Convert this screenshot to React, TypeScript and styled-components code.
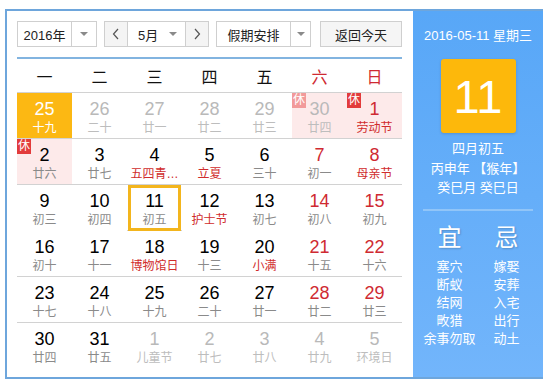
import React from "react";
import styled, { createGlobalStyle, css } from "styled-components";

const GlobalStyle = createGlobalStyle`
  body {
    margin: 0;
    background: #fff;
    font-family: "Liberation Sans", "Noto Sans CJK SC", sans-serif;
  }
`;

type Day = {
  n: number;
  sub: string;
  other?: boolean;
  red?: boolean;
  fest?: boolean;
  rest?: boolean;
  hover?: boolean;
  today?: boolean;
};

const weeks: Day[][] = [
  [
    { n: 25, sub: "十九", other: true, hover: true },
    { n: 26, sub: "二十", other: true },
    { n: 27, sub: "廿一", other: true },
    { n: 28, sub: "廿二", other: true },
    { n: 29, sub: "廿三", other: true },
    { n: 30, sub: "廿四", other: true, rest: true },
    { n: 1, sub: "劳动节", red: true, fest: true, rest: true },
  ],
  [
    { n: 2, sub: "廿六", rest: true },
    { n: 3, sub: "廿七" },
    { n: 4, sub: "五四青…", fest: true },
    { n: 5, sub: "立夏", fest: true },
    { n: 6, sub: "三十" },
    { n: 7, sub: "初一", red: true },
    { n: 8, sub: "母亲节", red: true, fest: true },
  ],
  [
    { n: 9, sub: "初三" },
    { n: 10, sub: "初四" },
    { n: 11, sub: "初五", today: true },
    { n: 12, sub: "护士节", fest: true },
    { n: 13, sub: "初七" },
    { n: 14, sub: "初八", red: true },
    { n: 15, sub: "初九", red: true },
  ],
  [
    { n: 16, sub: "初十" },
    { n: 17, sub: "十一" },
    { n: 18, sub: "博物馆日", fest: true },
    { n: 19, sub: "十三" },
    { n: 20, sub: "小满", fest: true },
    { n: 21, sub: "十五", red: true },
    { n: 22, sub: "十六", red: true },
  ],
  [
    { n: 23, sub: "十七" },
    { n: 24, sub: "十八" },
    { n: 25, sub: "十九" },
    { n: 26, sub: "二十" },
    { n: 27, sub: "廿一" },
    { n: 28, sub: "廿二", red: true },
    { n: 29, sub: "廿三", red: true },
  ],
  [
    { n: 30, sub: "廿四" },
    { n: 31, sub: "廿五" },
    { n: 1, sub: "儿童节", other: true },
    { n: 2, sub: "廿七", other: true },
    { n: 3, sub: "廿八", other: true },
    { n: 4, sub: "廿九", other: true },
    { n: 5, sub: "环境日", other: true },
  ],
];

const weekNames = ["一", "二", "三", "四", "五", "六", "日"];
const goodList = ["塞穴", "断蚁", "结网", "畋猎", "余事勿取"];
const badList = ["嫁娶", "安葬", "入宅", "出行", "动土"];

export default function App() {
  return (
    <>
      <GlobalStyle />
      <Frame>
        <Main>
          <Toolbar>
            <Select $w={80} $arrowW={24}>
              <SelectLabel>2016年</SelectLabel>
              <ArrowBox>
                <Caret />
              </ArrowBox>
            </Select>
            <MonthGroup>
              <NavButton>
                <svg width="8" height="12" viewBox="0 0 8 12">
                  <polyline points="6,1 1.5,6 6,11" fill="none" stroke="#555" strokeWidth="1.2" />
                </svg>
              </NavButton>
              <MonthBody>
                <span>5月</span>
                <Caret />
              </MonthBody>
              <NavButton $right>
                <svg width="8" height="12" viewBox="0 0 8 12">
                  <polyline points="2,1 6.5,6 2,11" fill="none" stroke="#555" strokeWidth="1.2" />
                </svg>
              </NavButton>
            </MonthGroup>
            <Select $w={95} $arrowW={19}>
              <SelectLabel>假期安排</SelectLabel>
              <ArrowBox>
                <Caret />
              </ArrowBox>
            </Select>
            <TodayButton>返回今天</TodayButton>
          </Toolbar>
          <WeekHead>
            {weekNames.map((w, i) => (
              <WeekName key={w} $weekend={i >= 5}>
                {w}
              </WeekName>
            ))}
          </WeekHead>
          {weeks.map((week, wi) => (
            <WeekRow key={wi}>
              {week.map((d, di) => (
                <Cell key={di} $rest={d.rest} $hover={d.hover} $today={d.today}>
                  {d.rest && <RestBadge $faded={d.other}>休</RestBadge>}
                  <DayNum $other={d.other} $red={d.red} $hover={d.hover}>
                    {d.n}
                  </DayNum>
                  <Lunar $other={d.other} $fest={d.fest} $hover={d.hover}>
                    {d.sub}
                  </Lunar>
                </Cell>
              ))}
            </WeekRow>
          ))}
        </Main>
        <Side>
          <SideDate>2016-05-11 星期三</SideDate>
          <BigDay>11</BigDay>
          <LunarInfo>
            <div>四月初五</div>
            <div>丙申年 【猴年】</div>
            <div>癸巳月 癸巳日</div>
          </LunarInfo>
          <Divider />
          <Almanac>
            <AlmanacCol>
              <AlmanacHead>宜</AlmanacHead>
              {goodList.map((t) => (
                <AlmanacItem key={t}>{t}</AlmanacItem>
              ))}
            </AlmanacCol>
            <AlmanacCol>
              <AlmanacHead>忌</AlmanacHead>
              {badList.map((t) => (
                <AlmanacItem key={t}>{t}</AlmanacItem>
              ))}
            </AlmanacCol>
          </Almanac>
        </Side>
      </Frame>
    </>
  );
}

const Frame = styled.div`
  display: flex;
  width: 536px;
  height: 366px;
  margin: 9px 0 0 5px;
  border: 2px solid #6ea6dc;
  border-right: none;
  background: #fff;
`;

const Main = styled.div`
  width: 385px;
  padding: 10px 11px 0 10px;
`;

const Toolbar = styled.div`
  display: flex;
  align-items: center;
  gap: 7px;
  height: 26px;
  padding-bottom: 10px;
  border-bottom: 2px solid #82b4e0;
  font-size: 13px;
  color: #222;
`;

const Select = styled.div<{ $w: number; $arrowW: number }>`
  display: flex;
  box-sizing: border-box;
  width: ${(p) => p.$w}px;
  height: 26px;
  border: 1px solid #cfcfcf;
  background: #fff;

  & > div:last-child {
    width: ${(p) => p.$arrowW}px;
  }
`;

const SelectLabel = styled.div`
  flex: 1;
  display: flex;
  align-items: center;
  justify-content: center;
  border-right: 1px solid #cfcfcf;
`;

const ArrowBox = styled.div`
  display: flex;
  align-items: center;
  justify-content: center;
`;

const Caret = styled.i`
  display: inline-block;
  width: 0;
  height: 0;
  border-left: 4px solid transparent;
  border-right: 4px solid transparent;
  border-top: 4px solid #8a8a8a;
`;

const MonthGroup = styled.div`
  display: flex;
  box-sizing: border-box;
  width: 105px;
  height: 26px;
  border: 1px solid #cfcfcf;
`;

const NavButton = styled.div<{ $right?: boolean }>`
  display: flex;
  align-items: center;
  justify-content: center;
  width: 22px;
  background: #f4f4f4;
  ${(p) => (p.$right ? "border-left: 1px solid #cfcfcf;" : "border-right: 1px solid #cfcfcf;")}
`;

const MonthBody = styled.div`
  flex: 1;
  display: flex;
  align-items: center;
  justify-content: space-between;
  padding: 0 8px 0 10px;
  background: #fff;
`;

const TodayButton = styled.div`
  display: flex;
  align-items: center;
  justify-content: center;
  box-sizing: border-box;
  width: 82px;
  height: 26px;
  margin-left: auto;
  border: 1px solid #cfcfcf;
  background: #f5f5f5;
`;

const WeekHead = styled.div`
  display: grid;
  grid-template-columns: repeat(7, 55px);
  height: 33px;
  align-items: center;
`;

const WeekName = styled.div<{ $weekend: boolean }>`
  text-align: center;
  font-size: 16px;
  color: ${(p) => (p.$weekend ? "#cf2a32" : "#111")};
`;

const WeekRow = styled.div`
  display: grid;
  grid-template-columns: repeat(7, 55px);
  height: 45px;
  border-top: 1px solid #d2d2d2;
`;

const Cell = styled.div<{ $rest?: boolean; $hover?: boolean; $today?: boolean }>`
  position: relative;
  box-sizing: border-box;
  padding-top: 5px;
  text-align: center;
  background: ${(p) => (p.$hover ? "#fcb813" : p.$rest ? "#fdeaea" : "#fff")};
  ${(p) =>
    p.$today &&
    css`
      padding-top: 2px;
      margin: 0 1px;
      border: 3px solid #f3b51d;
    `}
`;

const RestBadge = styled.span<{ $faded?: boolean }>`
  position: absolute;
  top: 0;
  left: 0;
  width: 14px;
  height: 15px;
  line-height: 15px;
  font-size: 12px;
  text-align: center;
  color: #fff;
  background: ${(p) => (p.$faded ? "#f29a9a" : "#e23b3b")};
`;

const DayNum = styled.div<{ $other?: boolean; $red?: boolean; $hover?: boolean }>`
  height: 22px;
  line-height: 22px;
  font-size: 18px;
  color: ${(p) => (p.$hover ? "#fff" : p.$other ? "#b9b9b9" : p.$red ? "#cf2a32" : "#000")};
`;

const Lunar = styled.div<{ $other?: boolean; $fest?: boolean; $hover?: boolean }>`
  height: 16px;
  line-height: 16px;
  font-size: 12px;
  white-space: nowrap;
  color: ${(p) => (p.$hover ? "#fff" : p.$other ? "#bdbdbd" : p.$fest ? "#d02c2c" : "#8a8a8a")};
`;

const Side = styled.div`
  display: flex;
  flex-direction: column;
  align-items: center;
  width: 130px;
  margin-left: auto;
  color: #fff;
  background: linear-gradient(#58a7f7, #72b5fb);
`;

const SideDate = styled.div`
  margin-top: 15px;
  font-size: 13px;
  line-height: 20px;
`;

const BigDay = styled.div`
  display: flex;
  align-items: center;
  justify-content: center;
  width: 75px;
  height: 74px;
  margin-top: 13px;
  border-radius: 3px;
  background: #fdb80b;
  box-shadow: 0 1px 3px rgba(0, 0, 0, 0.15);
  font-size: 47px;
  font-weight: 300;
`;

const LunarInfo = styled.div`
  margin-top: 6px;
  font-size: 13px;
  line-height: 19.5px;
  text-align: center;
`;

const Divider = styled.div`
  width: 110px;
  height: 2px;
  margin-top: 11px;
  background: #91c5f8;
`;

const Almanac = styled.div`
  display: grid;
  grid-template-columns: 57px 57px;
  margin-top: 13px;
`;

const AlmanacCol = styled.div`
  display: flex;
  flex-direction: column;
  align-items: center;
`;

const AlmanacHead = styled.div`
  font-size: 24px;
  line-height: 28px;
  margin-bottom: 6px;
  text-shadow: 1px 1px 2px rgba(0, 0, 0, 0.2);
`;

const AlmanacItem = styled.div`
  font-size: 13px;
  line-height: 18px;
  white-space: nowrap;
`;
